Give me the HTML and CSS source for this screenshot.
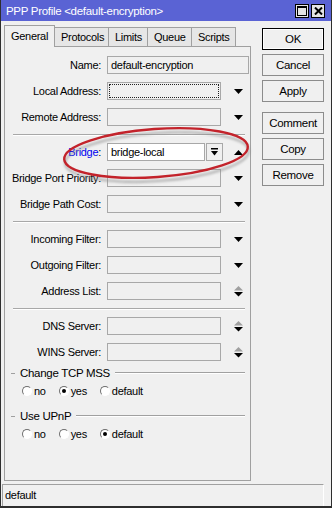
FILE: index.html
```html
<!DOCTYPE html>
<html lang="en">
<head>
    <meta charset="UTF-8">
    <meta name="viewport" content="width=device-width, initial-scale=1.0">
    <title>PPP Profile</title>
    <link rel="stylesheet" href="styles.css">
</head>
<body>
<div class="window">
    <div class="titlebar">
        <span class="title">PPP Profile &lt;default-encryption&gt;</span>
        <div class="tb-btns">
            <span class="tb-btn">
                <svg width="10" height="10" viewBox="0 0 10 10"><rect x="0.5" y="0.5" width="9" height="9" fill="none" stroke="#000"/><rect x="0" y="0" width="10" height="2" fill="#000"/></svg>
            </span>
            <span class="tb-btn">
                <svg width="9" height="8" viewBox="0 0 9 8"><path d="M1 0.5 L8 7.5 M8 0.5 L1 7.5" stroke="#000" stroke-width="2"/></svg>
            </span>
        </div>
    </div>

    <div class="main">
        <div class="left">
            <div class="tabs">
                <div class="tab active w-general">General</div>
                <div class="tab w-protocols">Protocols</div>
                <div class="tab w-limits">Limits</div>
                <div class="tab w-queue">Queue</div>
                <div class="tab w-scripts">Scripts</div>
            </div>
            <div class="panel">
                <div class="row">
                    <label>Name:</label>
                    <div class="field wide">default-encryption</div>
                </div>
                <div class="row">
                    <label>Local Address:</label>
                    <div class="field focus"></div>
                    <span class="arrow"><svg width="9" height="5"><polygon points="0,0 9,0 4.5,5" fill="#000"/></svg></span>
                </div>
                <div class="row">
                    <label>Remote Address:</label>
                    <div class="field"></div>
                    <span class="arrow"><svg width="9" height="5"><polygon points="0,0 9,0 4.5,5" fill="#000"/></svg></span>
                </div>

                <div class="sep"></div>

                <div class="row">
                    <label><span class="link">Bridge</span>:</label>
                    <div class="combo">
                        <div class="field white">bridge-local</div>
                        <span class="combo-btn"><svg width="7" height="8"><rect x="0" y="0" width="7" height="1.5" fill="#000"/><polygon points="0,3 7,3 3.5,7.5" fill="#000"/></svg></span>
                    </div>
                    <span class="arrow"><svg width="9" height="5"><polygon points="0,5 9,5 4.5,0" fill="#000"/></svg></span>
                </div>
                <div class="row">
                    <label>Bridge Port Priority:</label>
                    <div class="field"></div>
                    <span class="arrow"><svg width="9" height="5"><polygon points="0,0 9,0 4.5,5" fill="#000"/></svg></span>
                </div>
                <div class="row">
                    <label>Bridge Path Cost:</label>
                    <div class="field"></div>
                    <span class="arrow"><svg width="9" height="5"><polygon points="0,0 9,0 4.5,5" fill="#000"/></svg></span>
                </div>

                <div class="sep"></div>

                <div class="row">
                    <label>Incoming Filter:</label>
                    <div class="field"></div>
                    <span class="arrow"><svg width="9" height="5"><polygon points="0,0 9,0 4.5,5" fill="#000"/></svg></span>
                </div>
                <div class="row">
                    <label>Outgoing Filter:</label>
                    <div class="field"></div>
                    <span class="arrow"><svg width="9" height="5"><polygon points="0,0 9,0 4.5,5" fill="#000"/></svg></span>
                </div>
                <div class="row">
                    <label>Address List:</label>
                    <div class="field"></div>
                    <span class="arrow"><svg width="9" height="11"><polygon points="0,4.5 9,4.5 4.5,0" fill="#a0a0a0"/><polygon points="0,6 9,6 4.5,10.5" fill="#000"/></svg></span>
                </div>

                <div class="sep"></div>

                <div class="row">
                    <label>DNS Server:</label>
                    <div class="field"></div>
                    <span class="arrow"><svg width="9" height="11"><polygon points="0,4.5 9,4.5 4.5,0" fill="#a0a0a0"/><polygon points="0,6 9,6 4.5,10.5" fill="#000"/></svg></span>
                </div>
                <div class="row">
                    <label>WINS Server:</label>
                    <div class="field"></div>
                    <span class="arrow"><svg width="9" height="11"><polygon points="0,4.5 9,4.5 4.5,0" fill="#a0a0a0"/><polygon points="0,6 9,6 4.5,10.5" fill="#000"/></svg></span>
                </div>

                <div class="group first">
                    <span class="dash"></span>
                    <span class="group-title">Change TCP MSS</span>
                    <span class="line"></span>
                </div>
                <div class="radios">
                    <span class="radio"><span class="dot"></span>no</span>
                    <span class="radio"><span class="dot on"></span>yes</span>
                    <span class="radio"><span class="dot"></span>default</span>
                </div>

                <div class="group">
                    <span class="dash"></span>
                    <span class="group-title">Use UPnP</span>
                    <span class="line"></span>
                </div>
                <div class="radios">
                    <span class="radio"><span class="dot"></span>no</span>
                    <span class="radio"><span class="dot"></span>yes</span>
                    <span class="radio"><span class="dot on"></span>default</span>
                </div>
            </div>
        </div>

        <div class="buttons">
            <div class="btn default">OK</div>
            <div class="btn">Cancel</div>
            <div class="btn">Apply</div>
            <div class="btn spaced">Comment</div>
            <div class="btn">Copy</div>
            <div class="btn">Remove</div>
        </div>
    </div>

    <div class="status">default</div>

    <!-- red highlight drawn over the Bridge row -->
    <svg class="mark" width="332" height="508" viewBox="0 0 332 508">
        <defs>
            <filter id="soft" x="-10%" y="-30%" width="120%" height="160%">
                <feGaussianBlur stdDeviation="1.2"/>
            </filter>
        </defs>
        <ellipse cx="157" cy="157" rx="92" ry="24" transform="rotate(-4 157 157)" fill="none" stroke="#8a8a8a" stroke-opacity="0.55" stroke-width="2.5" filter="url(#soft)"/>
        <ellipse cx="156" cy="153" rx="92" ry="24" transform="rotate(-4 156 153)" fill="none" stroke="#c3232b" stroke-width="2.4"/>
    </svg>
</div>
</body>
</html>
```

FILE: styles.css
```css
body {
    margin: 0;
    background: #fff;
    font-family: "Liberation Sans", Arial, sans-serif;
    font-size: 11px;
    letter-spacing: -0.3px;
    color: #000;
}
.window {
    position: relative;
    width: 332px;
    height: 508px;
    box-sizing: border-box;
    background: #f0f0f0;
    border-left: 1px solid #2e2e2e;
    border-right: 1px solid #2e2e2e;
    border-bottom: 2px solid #2e2e2e;
    overflow: hidden;
}
.titlebar {
    height: 21px;
    margin: 0 -1px;
    background: #5a63d4;
    display: flex;
    align-items: center;
    justify-content: space-between;
    padding: 0 7px 0 6px;
}
.title {
    color: #fff;
    font-size: 11.5px;
}
.tb-btns {
    display: flex;
    gap: 2px;
    margin-top: 1px;
}
.tb-btn {
    width: 12px;
    height: 12px;
    background: #e4e4e4;
    border: 1px solid #000;
    display: flex;
    align-items: center;
    justify-content: center;
}

.main {
    display: flex;
    padding: 3px 7px 0 3px;
}
.left {
    width: 247px;
}
.tabs {
    height: 22px;
    display: flex;
    align-items: flex-end;
}
.tab {
    box-sizing: border-box;
    height: 19px;
    padding: 3px 0 0 6px;
    background: #e6e6e6;
    border: 1px solid #a0a0a0;
    border-bottom: none;
    border-left: none;
    white-space: nowrap;
}
.tab.active {
    position: relative;
    z-index: 1;
    height: 22px;
    margin-bottom: -1px;
    padding-top: 4px;
    background: #f0f0f0;
    border-left: 1px solid #a0a0a0;
}
.w-general { width: 51px; }
.w-protocols { width: 54px; }
.w-limits { width: 39px; }
.w-queue { width: 44px; }
.w-scripts { width: 44px; }

.panel {
    box-sizing: border-box;
    height: 435px;
    border: 1px solid #a0a0a0;
    padding: 9px 5px 0 0;
}
.row {
    display: grid;
    grid-template-columns: 96px 114px 22px;
    column-gap: 6px;
    height: 18px;
    margin-bottom: 8px;
    align-items: center;
}
.row label {
    text-align: right;
    white-space: nowrap;
}
.link {
    color: #0000f0;
}
.field {
    box-sizing: border-box;
    height: 18px;
    border: 1px solid #a8a8a8;
    background: #f0f0f0;
    padding: 2px 0 0 3px;
    white-space: nowrap;
    overflow: hidden;
}
.field.wide {
    grid-column: 2 / 4;
}
.field.white {
    background: #fff;
}
.field.focus {
    outline: 1px dotted #222;
    outline-offset: -3px;
}
.combo {
    display: flex;
    gap: 1px;
    width: 114px;
}
.combo .field {
    width: 98px;
    flex-shrink: 0;
}
.combo-btn {
    box-sizing: border-box;
    width: 17px;
    height: 18px;
    flex-shrink: 0;
    background: #f0f0f0;
    border: 1px solid #a8a8a8;
    display: flex;
    align-items: center;
    justify-content: center;
}
.arrow {
    display: flex;
    justify-content: center;
    align-items: center;
    padding-left: 1px;
}
.sep {
    height: 1px;
    background: #a8a8a8;
    border-bottom: 1px solid #fff;
    margin: 0 0 7px 8px;
}

.group {
    display: flex;
    align-items: center;
    height: 12px;
    padding-left: 6px;
    margin-top: 12px;
}
.group.first {
    margin-top: -2px;
}
.group .dash {
    width: 4px;
    height: 1px;
    background: #a0a0a0;
}
.group-title {
    padding: 0 5px;
    font-size: 11.5px;
}
.group .line {
    flex: 1;
    height: 1px;
    background: #a0a0a0;
    border-bottom: 1px solid #fff;
}
.radios {
    display: flex;
    gap: 13px;
    height: 14px;
    align-items: center;
    padding-left: 17px;
    margin-top: 5px;
}
.radio {
    display: flex;
    align-items: center;
    gap: 2px;
}
.dot {
    box-sizing: border-box;
    width: 10px;
    height: 10px;
    border-radius: 50%;
    border: 1px solid;
    border-color: #6e6e6e #fff #fff #6e6e6e;
    background: #fff;
    display: flex;
    align-items: center;
    justify-content: center;
}
.dot.on::after {
    content: "";
    width: 4px;
    height: 4px;
    border-radius: 50%;
    background: #000;
}

.buttons {
    width: 63px;
    margin-left: 11px;
    padding-top: 4px;
    display: flex;
    flex-direction: column;
    gap: 4px;
}
.btn {
    box-sizing: border-box;
    height: 22px;
    border: 1px solid #8c8c8c;
    background: #f0f0f0;
    display: flex;
    align-items: center;
    justify-content: center;
    font-size: 11.5px;
}
.btn.default {
    border: 1px solid #000;
    box-shadow: inset 0 0 0 1px #fff;
}
.btn.spaced {
    margin-top: 6px;
}

.status {
    box-sizing: border-box;
    height: 22px;
    margin: 3px 7px 0 1px;
    border-top: 1px solid #a0a0a0;
    border-left: 1px solid #a0a0a0;
    border-right: 1px solid #fff;
    padding: 4px 0 0 2px;
}
.mark {
    position: absolute;
    left: -1px;
    top: 0;
    pointer-events: none;
}
```
